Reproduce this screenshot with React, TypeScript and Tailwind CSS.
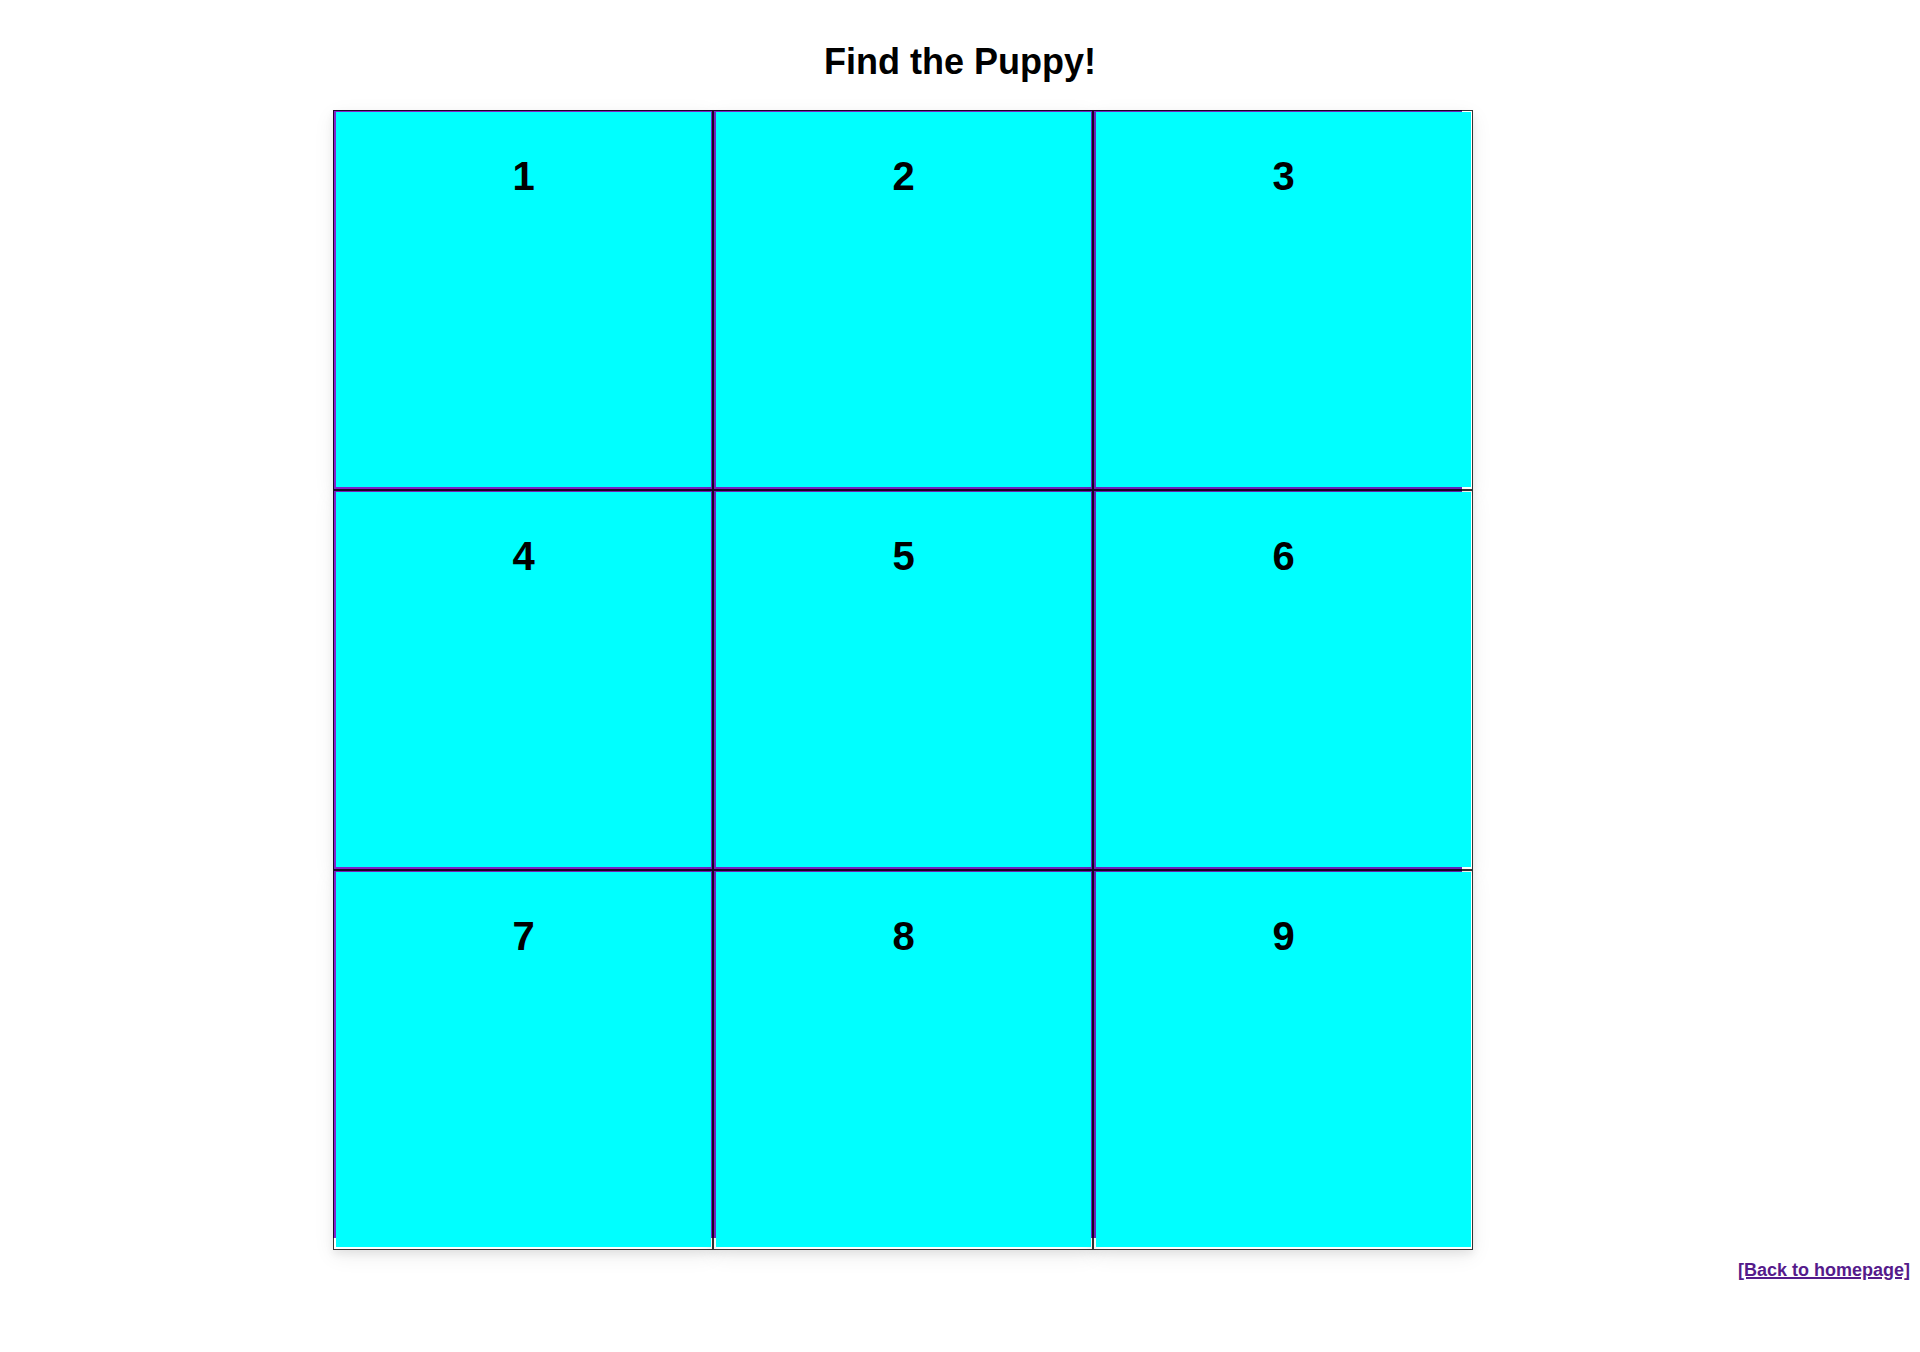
const cells = [1, 2, 3, 4, 5, 6, 7, 8, 9];

function Cell({ value }: { value: number }) {
  return (
    <button
      type="button"
      className="flex aspect-square border border-black/80 pt-px pr-px pb-0.5 pl-0.5 shadow-[0_4px_8px_0_rgba(0,0,0,0.07),0_6px_20px_0_rgba(0,0,0,0.07)]"
    >
      <span className="relative z-10 flex h-full w-full justify-center bg-[#00ffff] pt-11 text-[40px] leading-10 font-bold">
        {value}
      </span>
    </button>
  );
}

export default function App() {
  return (
    <main className="min-h-screen bg-white px-2 pt-[42px] font-['Liberation_Sans',Arial,sans-serif] text-black">
      <h1 className="text-center text-4xl leading-10 font-bold">Find the Puppy!</h1>
      <section
        aria-label="Game board"
        className="mt-7 ml-[325px] grid max-w-[1140px] grid-cols-3 bg-linear-to-r from-[#8224cc] to-[#6826bd] bg-[length:calc(100%-11px)_calc(100%-12px)] bg-no-repeat"
      >
        {cells.map((n) => (
          <Cell key={n} value={n} />
        ))}
      </section>
      <footer className="mt-1.5 flex justify-end pr-0.5 text-lg font-bold">
        <a href="#home" className="text-[#551a8b] underline decoration-2">
          [Back to homepage]
        </a>
      </footer>
    </main>
  );
}
